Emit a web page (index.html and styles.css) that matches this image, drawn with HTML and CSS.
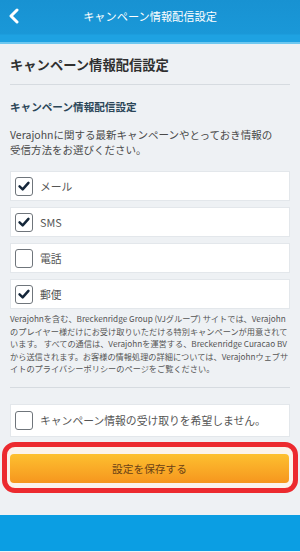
FILE: index.html
```html
<!DOCTYPE html>
<html lang="ja">
<head>
<meta charset="utf-8">
<title>キャンペーン情報配信設定</title>
<link rel="stylesheet" href="styles.css">
</head>
<body>
<header class="topbar">
  <svg class="back" width="14" height="16" viewBox="0 0 14 16" aria-hidden="true"><polyline points="10,2 4,8 10,14" fill="none" stroke="#fff" stroke-width="3" stroke-linecap="round" stroke-linejoin="round"/></svg>
  <h1 class="topbar-title">キャンペーン情報配信設定</h1>
</header>
<main class="content">
  <h2 class="page-title">キャンペーン情報配信設定</h2>
  <hr class="divider">
  <h3 class="section-title">キャンペーン情報配信設定</h3>
  <p class="intro">Verajohnに関する最新キャンペーンやとっておき情報の受信方法をお選びください。</p>
  <ul class="options">
    <li class="option"><span class="box"><svg viewBox="0 0 18 18" width="18" height="18"><polyline points="4,9.5 7.5,12.8 14,5.5" fill="none" stroke="#15273a" stroke-width="2.8" stroke-linecap="round" stroke-linejoin="round"/></svg></span><span class="label">メール</span></li>
    <li class="option"><span class="box"><svg viewBox="0 0 18 18" width="18" height="18"><polyline points="4,9.5 7.5,12.8 14,5.5" fill="none" stroke="#15273a" stroke-width="2.8" stroke-linecap="round" stroke-linejoin="round"/></svg></span><span class="label">SMS</span></li>
    <li class="option"><span class="box"></span><span class="label">電話</span></li>
    <li class="option"><span class="box"><svg viewBox="0 0 18 18" width="18" height="18"><polyline points="4,9.5 7.5,12.8 14,5.5" fill="none" stroke="#15273a" stroke-width="2.8" stroke-linecap="round" stroke-linejoin="round"/></svg></span><span class="label">郵便</span></li>
  </ul>
  <p class="notice">Verajohnを含む、Breckenridge Group (VJグループ) サイトでは、Verajohnのプレイヤー様だけにお受け取りいただける特別キャンペーンが用意されています。 すべての通信は、Verajohnを運営する、Breckenridge Curacao BVから送信されます。お客様の情報処理の詳細については、Verajohnウェブサイトのプライバシーポリシーのページをご覧ください。</p>
  <hr class="divider">
  <div class="option optout"><span class="box"></span><span class="label">キャンペーン情報の受け取りを希望しません。</span></div>
  <div class="save-wrap">
    <span class="highlight" aria-hidden="true"></span>
    <button class="save" type="button">設定を保存する</button>
  </div>
</main>
<footer class="footer"></footer>
</body>
</html>
```
FILE: styles.css
```css
* { box-sizing: border-box; }
html, body { margin: 0; padding: 0; }
body {
  width: 300px;
  min-height: 552px;
  background: #eef1f4;
  font-family: "Noto Sans CJK JP", "Noto Sans", sans-serif;
  color: #444;
  overflow: hidden;
}
.topbar {
  height: 44px;
  background: linear-gradient(#1892d2 0, #1a98d8 34px, #1ea2e2 35px, #1ea2e2 42px, #6ec8f0 42px, #6ec8f0 44px);
  display: flex;
  align-items: flex-start;
  padding-top: 8px;
  position: relative;
}
.back {
  margin-left: 7px;
  flex: none;
}
.topbar-title {
  margin: 0;
  flex: 1;
  text-align: center;
  color: #fff;
  font-size: 11.2px;
  font-weight: 400;
  line-height: 16px;
  margin-right: 21px;
}
.content {
  padding: 0 10px 32px;
}
.page-title {
  margin: 11px 0 0;
  font-size: 13.3px;
  line-height: 20px;
  font-weight: 700;
  color: #2f2f2f;
}
.divider {
  margin: 9px 0 0;
  border: 0;
  border-top: 1px solid #d6dbe0;
  height: 0;
}
.section-title {
  margin: 14px 0 0;
  font-size: 10.6px;
  line-height: 16px;
  font-weight: 700;
  color: #2b4658;
}
.intro {
  margin: 12px 0 0;
  max-width: 272px;
  font-size: 10.5px;
  line-height: 15px;
  color: #4a4a4a;
}
.options {
  list-style: none;
  margin: 14px 0 0;
  padding: 0;
  display: flex;
  flex-direction: column;
  gap: 6px;
}
.option {
  height: 30px;
  background: #fff;
  border: 1px solid #e3e7eb;
  display: flex;
  align-items: center;
  padding-left: 4px;
  width: 280px;
}
.box {
  width: 18px;
  height: 19px;
  border: 1.2px solid #6f757b;
  border-radius: 3px;
  background: #fff;
  display: flex;
  align-items: center;
  justify-content: center;
  flex: none;
}
.box svg { display: block; }
.label {
  margin-left: 7px;
  font-size: 10.8px;
  color: #555;
  line-height: 16px;
}
.notice {
  margin: 3px 0 0;
  font-size: 8.2px;
  line-height: 12.5px;
  color: #555;
}
.notice + .divider { margin-top: 12px; }
.optout {
  margin-top: 16px;
  height: 33px;
}
.save-wrap {
  position: relative;
  margin-top: 17px;
  width: 279px;
}
.highlight {
  position: absolute;
  left: -8px;
  right: -9px;
  top: -12px;
  bottom: -10px;
  border: 5px solid #ec2a2f;
  border-radius: 13px;
  background: #fbf3ec;
}
.save {
  position: relative;
  display: block;
  width: 100%;
  height: 29px;
  border: 0;
  border-radius: 4px;
  background: linear-gradient(#fdc030, #f6961e);
  color: #6b4216;
  font-family: "Noto Sans CJK JP", "Noto Sans", sans-serif;
  font-size: 10.7px;
  padding: 0;
}
.footer {
  height: 36px;
  background: #0b9ee3;
}
```
